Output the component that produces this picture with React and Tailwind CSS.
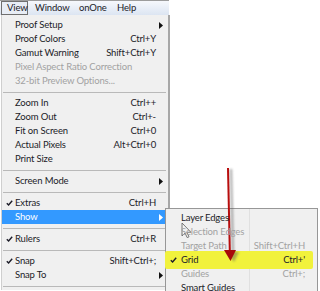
import React from "react";

const font = { fontFamily: "Lato, 'Liberation Sans', sans-serif" };

function Check({ className = "" }) {
  return (
    <svg width="7" height="6" viewBox="0 0 7 6" className={className}>
      <path d="M0.8 3.2 L2.6 5 L6.2 0.8" fill="none" stroke="currentColor" strokeWidth="1.4" />
    </svg>
  );
}

function Arrow({ white }) {
  return (
    <svg width="4" height="7" viewBox="0 0 4 7" className="absolute right-[5px] top-[4px]">
      <path d="M0 0 L4 3.5 L0 7 Z" fill={white ? "#ffffff" : "#111111"} />
    </svg>
  );
}

function Item({ label, shortcut, disabled, checked, sub, active }) {
  return (
    <div
      className={`relative flex h-[14px] items-center pr-[12px] ${
        active ? "bg-[#3399ff] text-white" : disabled ? "text-[#a2a2a2]" : "text-[#1c1c28]"
      }`}
    >
      <span className="flex w-[13px] justify-center pl-[2px]">{checked && <Check />}</span>
      <span className="flex-1 whitespace-nowrap">{label}</span>
      {shortcut && <span className="whitespace-nowrap">{shortcut}</span>}
      {sub && <Arrow white={active} />}
    </div>
  );
}

function Sep() {
  return (
    <div className="flex h-[8px] items-center pl-[1px] pr-[2px]">
      <div className="h-px w-full bg-[#b9b9b9]" />
    </div>
  );
}

function SubItem({ label, shortcut, disabled, checked }) {
  return (
    <div
      className={`relative z-10 flex h-[14px] items-center pr-[12px] ${
        disabled ? "text-[#a2a2a2]" : "text-[#1c1c28]"
      }`}
    >
      <span className="flex w-[15px] justify-center">{checked && <Check />}</span>
      <span className="flex-1 whitespace-nowrap">{label}</span>
      {shortcut && <span className="whitespace-nowrap">{shortcut}</span>}
    </div>
  );
}

export default function App() {
  return (
    <div
      className="relative h-[291px] w-[320px] overflow-hidden bg-white text-[9.5px] leading-none tracking-[-0.15px]"
      style={font}
    >
      {/* menu bar */}
      <div className="flex h-[15px] w-[169px] items-stretch border-t border-[#9c9c9c] bg-gradient-to-b from-[#f6f8fc] to-[#dce5f2] text-[#1c1c28]">
        <div className="ml-[1px] flex w-[27px] items-center border border-[#6f6f6f] bg-[#e8edf5] pl-[5px]">View</div>
        <div className="flex w-[51px] items-center pl-[7px]">Window</div>
        <div className="flex w-[38px] items-center">onOne</div>
        <div className="flex items-center">Help</div>
      </div>

      {/* view dropdown */}
      <div className="ml-[1px] w-[169px] border-l border-r-2 border-l-[#cfcfcf] border-r-[#a7a7a7] bg-[#f0f0f0] pt-[3px]">
        <Item label="Proof Setup" sub />
        <Item label="Proof Colors" shortcut="Ctrl+Y" />
        <Item label="Gamut Warning" shortcut="Shift+Ctrl+Y" />
        <Item label="Pixel Aspect Ratio Correction" disabled />
        <Item label="32-bit Preview Options..." disabled />
        <Sep />
        <Item label="Zoom In" shortcut="Ctrl++" />
        <Item label="Zoom Out" shortcut="Ctrl+-" />
        <Item label="Fit on Screen" shortcut="Ctrl+0" />
        <Item label="Actual Pixels" shortcut="Alt+Ctrl+0" />
        <Item label="Print Size" />
        <Sep />
        <Item label="Screen Mode" sub />
        <Sep />
        <Item label="Extras" shortcut="Ctrl+H" checked />
        <Item label="Show" sub active />
        <Sep />
        <Item label="Rulers" shortcut="Ctrl+R" checked />
        <Sep />
        <Item label="Snap" shortcut="Shift+Ctrl+;" checked />
        <Item label="Snap To" sub />
        <Sep />
      </div>

      {/* show submenu */}
      <div className="absolute left-[165px] top-[208px] h-[95px] w-[153px] border border-[#979797] bg-[#f0f0f0] pt-[2px]">
        <div className="absolute bottom-0 left-[83px] top-0 w-px bg-[#e0e0e0]" />
        <div className="absolute left-[-1px] top-[42px] h-[18px] w-[148px] rounded-[2px] bg-[#f1f23c] blur-[0.6px]" />
        <SubItem label="Layer Edges" />
        <SubItem label="Selection Edges" disabled />
        <SubItem label="Target Path" shortcut="Shift+Ctrl+H" disabled />
        <SubItem label="Grid" shortcut="Ctrl+'" checked />
        <SubItem label="Guides" shortcut="Ctrl+;" disabled />
        <SubItem label="Smart Guides" />
      </div>

      {/* annotation arrow + cursor */}
      <svg className="absolute left-0 top-0" width="320" height="291" viewBox="0 0 320 291">
        <defs>
          <filter id="sh" x="-50%" y="-10%" width="200%" height="120%">
            <feGaussianBlur stdDeviation="1.2" />
          </filter>
        </defs>
        <g filter="url(#sh)" opacity="0.45">
          <path d="M231 169 L233 252" stroke="#555" strokeWidth="2.4" />
          <path d="M227 252 L239 252 L234 262 Z" fill="#555" />
        </g>
        <path d="M228 168 L229.8 251" stroke="#b80d0d" strokeWidth="2" />
        <path d="M224 250 L236 250 L230.5 261 Z" fill="#a80a0a" />
        <path
          d="M182 223 L182 236 L185 233 L187.2 237.6 L189 236.8 L186.9 232.3 L191 232.3 Z"
          fill="#f4f4f4"
          stroke="#6a6a6a"
          strokeWidth="0.9"
          strokeLinejoin="round"
        />
      </svg>
    </div>
  );
}
